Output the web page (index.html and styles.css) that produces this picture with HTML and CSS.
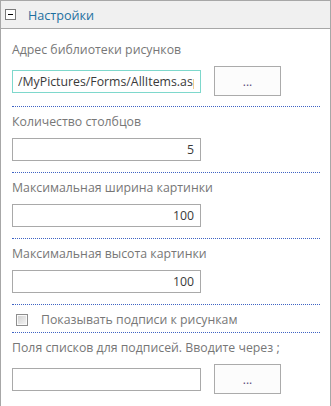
FILE: index.html
```html
<!DOCTYPE html>
<html lang="ru">
<head>
    <meta charset="UTF-8">
    <meta name="viewport" content="width=device-width, initial-scale=1.0">
    <title>Настройки</title>
    <link rel="stylesheet" href="styles.css">
</head>
<body>
    <div class="pane">
        <div class="pane-header">
            <span class="toggle"></span>
            <span class="pane-title">Настройки</span>
        </div>
        <div class="section first">
            <div class="label">Адрес библиотеки рисунков</div>
            <div class="field-row">
                <input type="text" class="field active" value="/MyPictures/Forms/AllItems.aspx">
                <button type="button" class="browse">...</button>
            </div>
        </div>
        <div class="section">
            <div class="label">Количество столбцов</div>
            <input type="text" class="field number" value="5">
        </div>
        <div class="section">
            <div class="label">Максимальная ширина картинки</div>
            <input type="text" class="field number" value="100">
        </div>
        <div class="section">
            <div class="label">Максимальная высота картинки</div>
            <input type="text" class="field number" value="100">
        </div>
        <div class="section check-section">
            <label class="check-row">
                <span class="check-box"></span>
                <span class="check-text">Показывать подписи к рисункам</span>
            </label>
        </div>
        <div class="section last">
            <div class="label">Поля списков для подписей. Вводите через ;</div>
            <div class="field-row">
                <input type="text" class="field" value="">
                <button type="button" class="browse">...</button>
            </div>
        </div>
    </div>
</body>
</html>
```

FILE: styles.css
```css
body {
    margin: 0;
    font-family: 'Open Sans', 'Noto Sans', sans-serif;
    font-size: 12.3px;
    background-color: #ffffff;
    overflow: hidden;
}
.pane {
    width: 331px;
    min-height: 100vh;
    box-sizing: border-box;
    border: 1px solid #a7a7a7;
    border-bottom: none;
    padding: 0 10px 0 11px;
}
.pane-header {
    display: flex;
    align-items: center;
    height: 27px;
    margin: 0 -10px 0 -11px;
    padding-left: 4px;
    background-color: #f0f0f0;
    border-bottom: 1px solid #a7a7a7;
}
.toggle {
    position: relative;
    width: 9px;
    height: 9px;
    border: 1px solid #7a7a7a;
    background-color: #fff;
}
.toggle::after {
    content: '';
    position: absolute;
    left: 2px;
    top: 4px;
    width: 5px;
    height: 1px;
    background-color: #000;
}
.pane-title {
    margin-left: 12px;
    margin-top: 3px;
    line-height: 18px;
    font-size: 12.6px;
    color: #1d6f9f;
}
.section {
    padding: 6px 0 11px;
    border-bottom: 1px dotted #3f63c4;
}
.section.first {
    padding: 12px 0 10px;
}
.section.last {
    border-bottom: none;
}
.label {
    line-height: 18px;
    color: #777;
    margin-bottom: 7px;
}
.field-row {
    display: flex;
    align-items: center;
    height: 30px;
}
.field {
    display: block;
    width: 189px;
    height: 23px;
    box-sizing: border-box;
    margin: 0;
    padding: 0 6px 0 5px;
    border: 1px solid #a9a9a9;
    font-family: inherit;
    font-size: 12.3px;
    color: #3a3a3a;
    background-color: #fff;
    outline: none;
}
.field.active {
    border-color: #7ed8cc;
}
.field.number {
    text-align: right;
}
.browse {
    width: 67px;
    height: 30px;
    margin-left: 13px;
    padding: 0;
    border: 1px solid #ababab;
    background-color: #fcfcfc;
    font-family: inherit;
    font-size: 12px;
    color: #5a4a7a;
}
.check-section {
    padding: 6px 0 3px;
}
.check-row {
    display: flex;
    align-items: center;
    height: 18px;
    padding-left: 4px;
}
.check-box {
    width: 10px;
    height: 10px;
    border: 1px solid #8e8e8e;
    background: linear-gradient(135deg, #cfcfcf, #f6f6f6);
    box-shadow: inset 0 0 0 1px #fafafa;
}
.check-text {
    margin-left: 13px;
    line-height: 18px;
    color: #777;
}
```
